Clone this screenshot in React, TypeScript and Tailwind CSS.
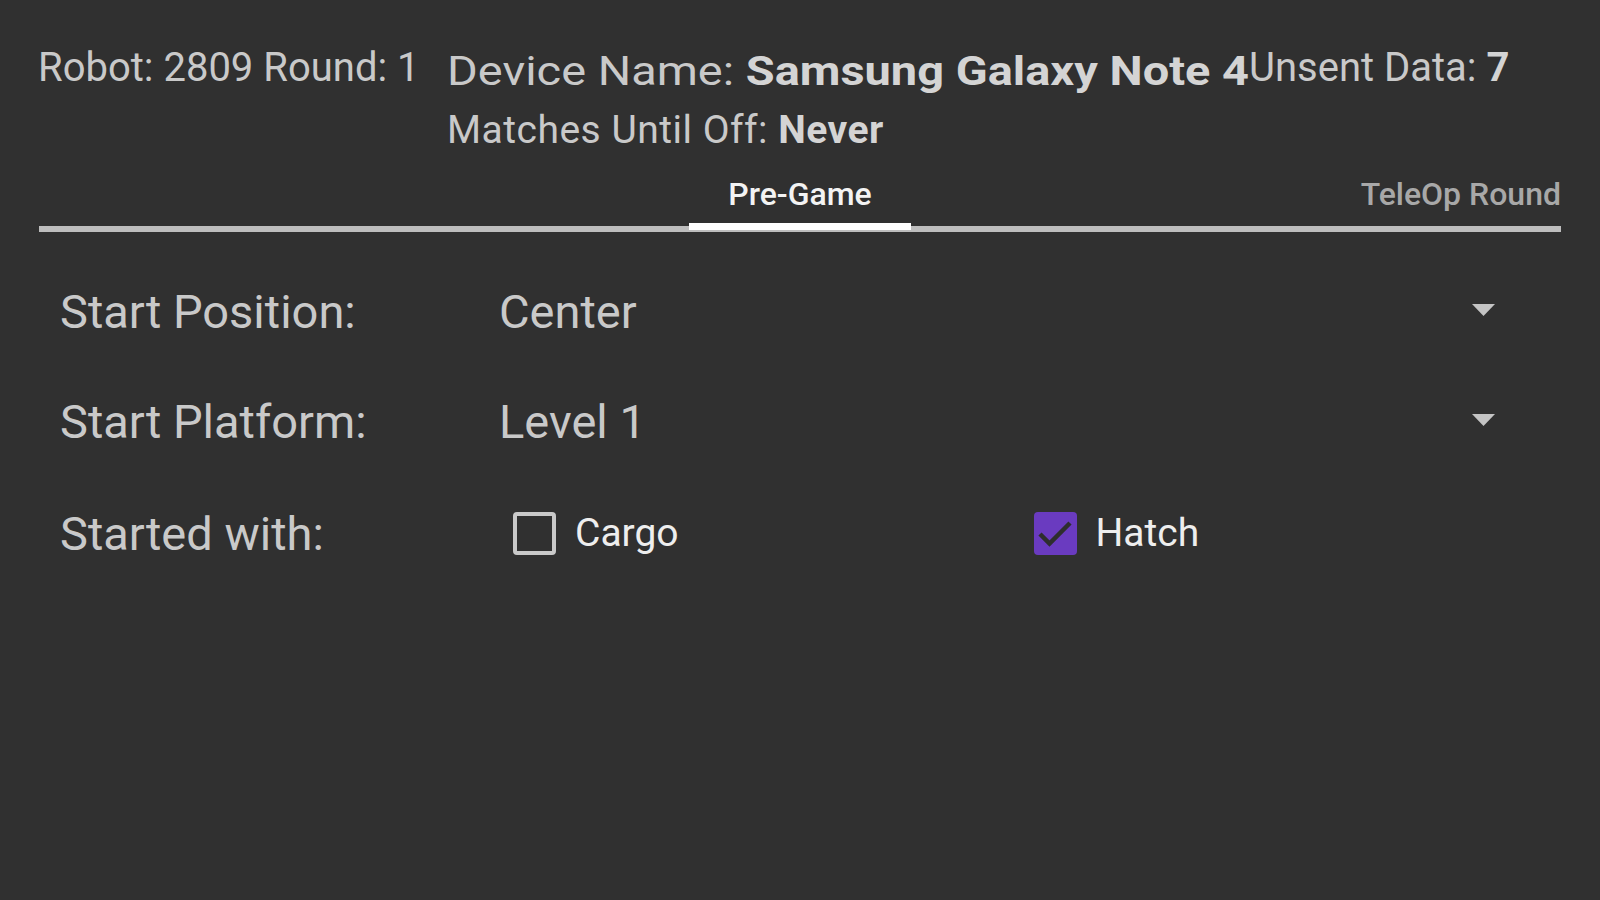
import React from "react";

function Arrow() {
  return (
    <svg width="23" height="12" viewBox="0 0 23 12" className="mb-[3px]">
      <polygon points="0,0 23,0 11.5,12" fill="#c4c4c4" />
    </svg>
  );
}

function Check({ checked }: { checked: boolean }) {
  if (checked) {
    return (
      <div className="w-[43px] h-[43px] rounded-[4px] bg-[#6a3bc0] flex items-center justify-center shrink-0">
        <svg width="43" height="43" viewBox="0 0 43 43">
          <polyline points="6,22 15.5,31.5 36,11" fill="none" stroke="#2e2e2e" strokeWidth="4.5" />
        </svg>
      </div>
    );
  }
  return <div className="w-[43px] h-[43px] rounded-[4px] border-[4px] border-[#c9c9c9] shrink-0" />;
}

function Row({ label, children, extra = "" }: { label: string; children: React.ReactNode; extra?: string }) {
  return (
    <div className={"flex h-[110px] items-center " + extra}>
      <div className="w-[439px] shrink-0 text-[47px] leading-none whitespace-nowrap">{label}</div>
      <div className="flex-1 h-full flex items-center">{children}</div>
    </div>
  );
}

export default function App() {
  return (
    <div className="w-[1600px] h-[900px] bg-[#303030] font-['Roboto',sans-serif] text-[#c9c9c9] overflow-hidden">
      {/* header */}
      <div className="flex items-start pl-[38px] pt-[48px]">
        <div className="w-[409px] shrink-0 text-[40px] leading-none whitespace-nowrap">Robot: 2809 Round: 1</div>
        <div className="w-[802px] shrink-0 flex flex-col mt-[3px]">
          <div className="text-[41px] leading-none whitespace-nowrap origin-left scale-x-[1.145]">
            Device Name: <span className="font-bold text-[#d4d4d4]">Samsung Galaxy Note 4</span>
          </div>
          <div className="mt-[19px] text-[39px] leading-none whitespace-nowrap tracking-[0.5px]">
            Matches Until Off: <span className="font-bold text-[#d4d4d4]">Never</span>
          </div>
        </div>
        <div className="text-[40px] leading-none whitespace-nowrap">
          Unsent Data: <span className="font-bold text-[#d4d4d4]">7</span>
        </div>
      </div>

      {/* tab strip */}
      <div className="mx-[39px] mt-[28px]">
        <div className="grid grid-cols-[1fr_222px_1fr] items-start">
          <div />
          <div className="flex flex-col items-center">
            <span className="text-[32px] leading-none font-medium text-[#f3f3f3] whitespace-nowrap">Pre-Game</span>
            <div className="relative z-10 mt-[13px] -mb-[4px] h-[7px] w-full bg-white" />
          </div>
          <div className="text-right text-[32px] leading-none font-medium text-[#a8a8a8] whitespace-nowrap">TeleOp Round</div>
        </div>
        <div className="h-[6px] bg-[#bdbdbd]" />
      </div>

      {/* form */}
      <div className="pl-[60px] pr-[60px] pt-[24px]">
        <Row label="Start Position:">
          <div className="flex-1 flex items-center justify-between pr-[45px]">
            <span className="text-[47px] leading-none">Center</span>
            <Arrow />
          </div>
        </Row>
        <Row label="Start Platform:">
          <div className="flex-1 flex items-center justify-between pr-[45px]">
            <span className="text-[47px] leading-none">Level 1</span>
            <Arrow />
          </div>
        </Row>
        <Row label="Started with:" extra="mt-[2px]">
          <div className="flex-1 grid grid-cols-2 items-center">
            <div className="flex items-center pl-[14px] gap-[19px]">
              <Check checked={false} />
              <span className="text-[39px] leading-none text-[#eeeeee]">Cargo</span>
            </div>
            <div className="flex items-center pl-[14px] gap-[19px]">
              <Check checked={true} />
              <span className="text-[39px] leading-none text-[#eeeeee]">Hatch</span>
            </div>
          </div>
        </Row>
      </div>
    </div>
  );
}
